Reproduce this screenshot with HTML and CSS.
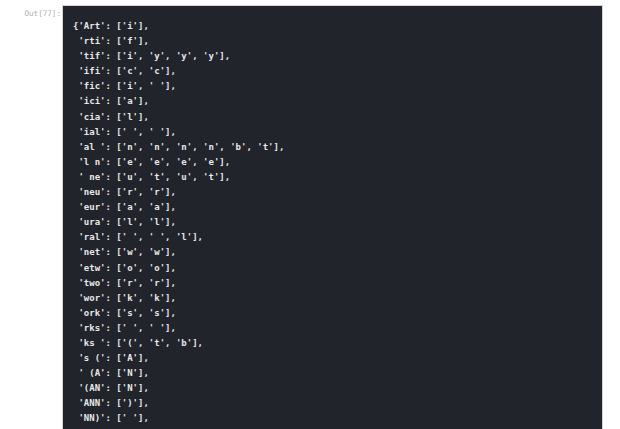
FILE: index.html
```html
<!DOCTYPE html>
<html>
<head>
<meta charset="utf-8">
<link rel="stylesheet" href="styles.css">
</head>
<body>
<div class="cell">
  <div class="prompt">Out[77]:</div>
  <div class="output"><pre class="code">{'Art': ['i'],
 'rti': ['f'],
 'tif': ['i', 'y', 'y', 'y'],
 'ifi': ['c', 'c'],
 'fic': ['i', ' '],
 'ici': ['a'],
 'cia': ['l'],
 'ial': [' ', ' '],
 'al ': ['n', 'n', 'n', 'n', 'b', 't'],
 'l n': ['e', 'e', 'e', 'e'],
 ' ne': ['u', 't', 'u', 't'],
 'neu': ['r', 'r'],
 'eur': ['a', 'a'],
 'ura': ['l', 'l'],
 'ral': [' ', ' ', 'l'],
 'net': ['w', 'w'],
 'etw': ['o', 'o'],
 'two': ['r', 'r'],
 'wor': ['k', 'k'],
 'ork': ['s', 's'],
 'rks': [' ', ' '],
 'ks ': ['(', 't', 'b'],
 's (': ['A'],
 ' (A': ['N'],
 '(AN': ['N'],
 'ANN': [')'],
 'NN)': [' '],</pre></div>
</div>
</body>
</html>
```
FILE: styles.css
```css
html, body {
  margin: 0;
  padding: 0;
  background: #ffffff;
  overflow: hidden;
  height: 100%;
}
.cell {
  display: flex;
  align-items: flex-start;
  padding-top: 5px;
}
.prompt {
  width: 62px;
  flex: none;
  box-sizing: border-box;
  padding-right: 1px;
  padding-top: 4px;
  text-align: right;
  font-family: "DejaVu Sans Mono", monospace;
  font-size: 7.6px;
  color: #b0b0b0;
}
.output {
  width: 541px;
  flex: none;
  box-sizing: border-box;
  border: 1px solid #d4d4d4;
  border-bottom: 0;
  background: #21242b;
  padding: 13px 10px 0 10px;
  height: calc(100vh - 5px);
}
.code {
  margin: 0;
  font-family: "DejaVu Sans Mono", monospace;
  font-weight: bold;
  font-size: 9px;
  line-height: 15.1px;
  color: #e8e8e8;
  white-space: pre;
}
```
